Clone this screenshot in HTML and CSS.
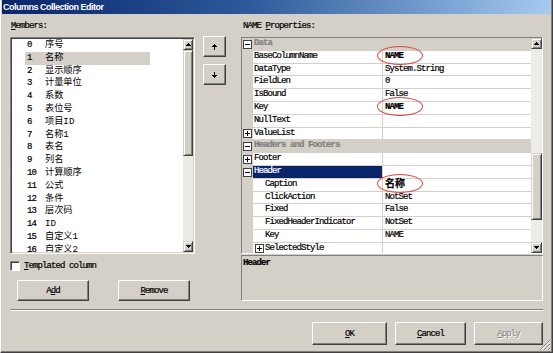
FILE: index.html
```html
<!DOCTYPE html>
<html>
<head>
<meta charset="utf-8">
<link rel="stylesheet" href="styles.css">
</head>
<body>
<div class="window">
  <div class="titlebar"><span class="title">Columns Collection Editor</span></div>
  <div class="content">
    <div class="left">
      <div class="label"><u>M</u>embers:</div>
      <div class="list-row">
        <div class="listbox">
          <ul class="items">
            <li><span class="num">0</span><span class="nm">序号</span></li>
            <li class="sel"><span class="num">1</span><span class="nm">名称</span></li>
            <li><span class="num">2</span><span class="nm">显示顺序</span></li>
            <li><span class="num">3</span><span class="nm">计量单位</span></li>
            <li><span class="num">4</span><span class="nm">系数</span></li>
            <li><span class="num">5</span><span class="nm">表位号</span></li>
            <li><span class="num">6</span><span class="nm">项目ID</span></li>
            <li><span class="num">7</span><span class="nm">名称1</span></li>
            <li><span class="num">8</span><span class="nm">表名</span></li>
            <li><span class="num">9</span><span class="nm">列名</span></li>
            <li><span class="num">10</span><span class="nm">计算顺序</span></li>
            <li><span class="num">11</span><span class="nm">公式</span></li>
            <li><span class="num">12</span><span class="nm">条件</span></li>
            <li><span class="num">13</span><span class="nm">层次码</span></li>
            <li><span class="num">14</span><span class="nm">ID</span></li>
            <li><span class="num">15</span><span class="nm">自定义1</span></li>
            <li><span class="num">16</span><span class="nm">自定义2</span></li>
          </ul>
          <div class="vscroll">
            <div class="sbtn"><svg width="5" height="3" viewBox="0 0 5 3" shape-rendering="crispEdges"><path d="M2 0h1v1h1v1h1v1h-5v-1h1v-1h1z" fill="#000"/></svg></div>
            <div class="sbtn list-thumb"></div>
            <div class="fill"></div>
            <div class="sbtn"><svg width="5" height="3" viewBox="0 0 5 3" shape-rendering="crispEdges"><path d="M0 0h5v1h-1v1h-1v1h-1v-1h-1v-1h-1z" fill="#000"/></svg></div>
          </div>
        </div>
        <div class="move-btns">
          <button class="btn move"><svg width="5" height="6" viewBox="0 0 5 6" shape-rendering="crispEdges"><path d="M2 0h1v1h1v1h1v1h-2v3h-1v-3h-2v-1h1v-1h1z" fill="#000"/></svg></button>
          <button class="btn move"><svg width="5" height="6" viewBox="0 0 5 6" shape-rendering="crispEdges"><path d="M2 0h1v3h2v1h-1v1h-1v1h-1v-1h-1v-1h-1v-1h2z" fill="#000"/></svg></button>
        </div>
      </div>
      <div class="check"><span class="cbox"></span><span class="check-text"><u>T</u>emplated column</span></div>
      <div class="add-row">
        <button class="btn wide">A<u>d</u>d</button>
        <button class="btn wide"><u>R</u>emove</button>
      </div>
    </div>
    <div class="right">
      <div class="label rlabel">NAME <u>P</u>roperties:</div>
      <div class="grid">
        <div class="rows">
          <div class="row cat"><div class="m"><svg width="9" height="9" viewBox="0 0 9 9" shape-rendering="crispEdges"><rect x="0.5" y="0.5" width="8" height="8" fill="#fff" stroke="#404040"/><path d="M2 4.5h5" stroke="#000"/></svg></div><div class="cells"><div class="c">Data</div></div></div>
          <div class="row"><div class="m"></div><div class="cells"><div class="n">BaseColumnName</div><div class="v"><b>NAME</b><span class="ring"></span></div></div></div>
          <div class="row"><div class="m"></div><div class="cells"><div class="n">DataType</div><div class="v">System.String</div></div></div>
          <div class="row"><div class="m"></div><div class="cells"><div class="n">FieldLen</div><div class="v">0</div></div></div>
          <div class="row"><div class="m"></div><div class="cells"><div class="n">IsBound</div><div class="v">False</div></div></div>
          <div class="row"><div class="m"></div><div class="cells"><div class="n">Key</div><div class="v"><b>NAME</b><span class="ring"></span></div></div></div>
          <div class="row"><div class="m"></div><div class="cells"><div class="n">NullText</div><div class="v"></div></div></div>
          <div class="row"><div class="m"><svg width="9" height="9" viewBox="0 0 9 9" shape-rendering="crispEdges"><rect x="0.5" y="0.5" width="8" height="8" fill="#fff" stroke="#404040"/><path d="M2 4.5h5M4.5 2v5" stroke="#000"/></svg></div><div class="cells"><div class="n">ValueList</div><div class="v"></div></div></div>
          <div class="row cat"><div class="m"><svg width="9" height="9" viewBox="0 0 9 9" shape-rendering="crispEdges"><rect x="0.5" y="0.5" width="8" height="8" fill="#fff" stroke="#404040"/><path d="M2 4.5h5" stroke="#000"/></svg></div><div class="cells"><div class="c">Headers and Footers</div></div></div>
          <div class="row"><div class="m"><svg width="9" height="9" viewBox="0 0 9 9" shape-rendering="crispEdges"><rect x="0.5" y="0.5" width="8" height="8" fill="#fff" stroke="#404040"/><path d="M2 4.5h5M4.5 2v5" stroke="#000"/></svg></div><div class="cells"><div class="n">Footer</div><div class="v"></div></div></div>
          <div class="row selrow"><div class="m"><svg width="9" height="9" viewBox="0 0 9 9" shape-rendering="crispEdges"><rect x="0.5" y="0.5" width="8" height="8" fill="#fff" stroke="#404040"/><path d="M2 4.5h5" stroke="#000"/></svg></div><div class="cells"><div class="n">Header</div><div class="v"></div></div></div>
          <div class="row sub"><div class="m"></div><div class="cells"><div class="n">Caption</div><div class="v"><b class="cap">名称</b><span class="ring"></span></div></div></div>
          <div class="row sub"><div class="m"></div><div class="cells"><div class="n">ClickAction</div><div class="v">NotSet</div></div></div>
          <div class="row sub"><div class="m"></div><div class="cells"><div class="n">Fixed</div><div class="v">False</div></div></div>
          <div class="row sub"><div class="m"></div><div class="cells"><div class="n">FixedHeaderIndicator</div><div class="v">NotSet</div></div></div>
          <div class="row sub"><div class="m"></div><div class="cells"><div class="n">Key</div><div class="v">NAME</div></div></div>
          <div class="row subexp"><div class="m"></div><div class="cells"><div class="n"><svg width="9" height="9" viewBox="0 0 9 9" shape-rendering="crispEdges"><rect x="0.5" y="0.5" width="8" height="8" fill="#fff" stroke="#404040"/><path d="M2 4.5h5M4.5 2v5" stroke="#000"/></svg><span>SelectedStyle</span></div><div class="v"></div></div></div>
        </div>
        <div class="vscroll gscroll">
          <div class="sbtn"><svg width="5" height="3" viewBox="0 0 5 3" shape-rendering="crispEdges"><path d="M2 0h1v1h1v1h1v1h-5v-1h1v-1h1z" fill="#000"/></svg></div>
          <div class="fill top-fill"></div>
          <div class="sbtn grid-thumb"></div>
          <div class="fill"></div>
          <div class="sbtn"><svg width="5" height="3" viewBox="0 0 5 3" shape-rendering="crispEdges"><path d="M0 0h5v1h-1v1h-1v1h-1v-1h-1v-1h-1z" fill="#000"/></svg></div>
        </div>
      </div>
      <div class="desc">Header</div>
    </div>
  </div>
  <div class="sep"></div>
  <div class="footer">
    <button class="btn ok"><u>O</u>K</button>
    <button class="btn cancel"><u>C</u>ancel</button>
    <button class="btn apply" disabled><u>A</u>pply</button>
  </div>
  <svg class="grip" width="12" height="12" viewBox="0 0 12 12">
    <path d="M11 1L1 11M11 5L5 11M11 9L9 11" stroke="#808080" stroke-width="1"/>
    <path d="M11 2L2 11M11 6L6 11M11 10L10 11" stroke="#fff" stroke-width="1"/>
  </svg>
</div>
</body>
</html>
```

FILE: styles.css
```css
* { box-sizing: border-box; }
html, body { margin: 0; padding: 0; }
body {
  width: 553px;
  height: 353px;
  overflow: hidden;
  background: #d4d0c8;
  font-family: "Liberation Mono", "Noto Sans CJK SC", monospace;
  font-size: 9px;
  letter-spacing: -0.9px;
  color: #000;
  -webkit-text-stroke: 0.2px currentColor;
}
u { text-decoration: underline; }

.window {
  position: relative;
  width: 553px;
  height: 353px;
  border-left: 1px solid #fff;
  border-right: 1px solid #404040;
  border-bottom: 1px solid #404040;
  box-shadow: inset -1px -1px #808080;
  display: flex;
  flex-direction: column;
}

.titlebar {
  height: 14px;
  margin: 0 1px;
  padding-left: 1px;
  background: linear-gradient(90deg, #0a246a 0%, #2d5a9a 45%, #a6caf0 100%);
  display: flex;
  align-items: center;
}
.title {
  font-family: "Liberation Sans", sans-serif;
  font-weight: bold;
  font-size: 9px;
  letter-spacing: -0.5px;
  color: #fff;
  -webkit-text-stroke: 0;
}

.content {
  display: flex;
  gap: 15px;
  padding: 6px 9px 0 9px;
}
.left { width: 216px; display: flex; flex-direction: column; }
.right { width: 302px; display: flex; flex-direction: column; }

.label { height: 17px; line-height: 13px; padding-left: 1px; }
.rlabel { padding-left: 2px; }

.list-row { display: flex; }
.listbox {
  width: 185px;
  height: 217px;
  border: 1px solid;
  border-color: #808080 #fff #fff #808080;
  box-shadow: inset 1px 1px #404040, inset -1px -1px #d4d0c8;
  background: #fff;
  padding: 1px;
  display: flex;
}
.items {
  flex: 1;
  list-style: none;
  margin: 0;
  padding: 0;
  overflow: hidden;
}
.items li {
  display: flex;
  height: 12.8px;
  line-height: 12.8px;
  margin-left: 13px;
  width: 125px;
  white-space: nowrap;
}
.items li.sel { background: #d4d0c8; }
.num { width: 20px; padding-left: 2px; flex: none; }
.nm { letter-spacing: 0; font-size: 9.2px; -webkit-text-stroke: 0; }

.vscroll {
  width: 10px;
  flex: none;
  display: flex;
  flex-direction: column;
  background: #ecebe7;
}
.sbtn {
  height: 11px;
  flex: none;
  background: #d4d0c8;
  border: 1px solid;
  border-color: #d4d0c8 #404040 #404040 #d4d0c8;
  box-shadow: inset 1px 1px #fff, inset -1px -1px #808080;
  display: flex;
  align-items: center;
  justify-content: center;
}
.list-thumb { height: 106px; }
.fill { flex: 1; }

.move-btns {
  margin-left: 8px;
  margin-top: -1px;
  display: flex;
  flex-direction: column;
  gap: 7px;
}

.btn {
  font: inherit;
  letter-spacing: inherit;
  color: #000;
  padding: 0;
  margin: 0;
  background: #d4d0c8;
  border: 1px solid;
  border-color: #fff #404040 #404040 #fff;
  box-shadow: inset -1px -1px #808080;
  display: flex;
  align-items: center;
  justify-content: center;
}
.move { width: 23px; height: 21px; }

.check {
  display: flex;
  align-items: center;
  margin-top: 7px;
  height: 10px;
}
.cbox {
  width: 10px;
  height: 10px;
  background: #fff;
  border: 1px solid;
  border-color: #808080 #fff #fff #808080;
  box-shadow: inset 1px 1px #404040;
}
.check-text { margin-left: 4px; }

.add-row {
  display: flex;
  gap: 29px;
  padding-left: 7px;
  margin-top: 9px;
}
.wide { width: 72px; height: 21px; }

.grid {
  height: 217px;
  border: 1px solid;
  border-color: #808080 #fff #fff #808080;
  background: #fff;
  display: flex;
}
.rows { width: 289px; overflow: hidden; }
.row { display: flex; height: 12.8px; }
.m {
  width: 11px;
  flex: none;
  background: #d4d0c8;
  display: flex;
  align-items: center;
  padding-left: 1px;
}
.cells {
  flex: 1;
  display: flex;
  border-bottom: 1px solid #d4d0c8;
  line-height: 11.8px;
  white-space: nowrap;
}
.n {
  width: 130px;
  flex: none;
  border-right: 1px solid #d4d0c8;
  padding-left: 1px;
}
.v {
  flex: 1;
  padding-left: 2px;
  position: relative;
}
.cat .cells { background: #d4d0c8; border-bottom-color: #d4d0c8; }
.c { padding-left: 1px; color: #808080; font-weight: bold; }
.sub .n { padding-left: 12px; }
.subexp .n { padding-left: 2px; display: flex; align-items: center; gap: 1px; }
.selrow .n { background: #0a246a; color: #fff; }
.cap { font-size: 10px; letter-spacing: 0; }

.ring {
  position: absolute;
  left: -6px;
  top: -5px;
  width: 46px;
  height: 19px;
  border: 1px solid #d84a4a;
  border-radius: 50%;
}

.gscroll { width: 11px; }
.top-fill { flex: none; height: 104px; }
.grid-thumb { height: 67px; }

.desc {
  margin-top: 1px;
  height: 46px;
  border: 1px solid;
  border-color: #808080 #fff #fff #808080;
  padding: 2px 1px;
  font-weight: bold;
  line-height: 10px;
}

.sep {
  margin: 8px 9px 0 9px;
  height: 2px;
  border-top: 1px solid #808080;
  border-bottom: 1px solid #fff;
}

.footer {
  display: flex;
  justify-content: flex-end;
  gap: 8px;
  padding-right: 9px;
  margin-top: 11px;
}
.footer .btn { height: 23px; }
.ok { width: 75px; }
.cancel { width: 71px; }
.apply { width: 69px; color: #808080; text-shadow: 1px 1px #fff; -webkit-text-stroke: 0; }

.grip {
  position: absolute;
  right: 1px;
  bottom: 1px;
}
```
